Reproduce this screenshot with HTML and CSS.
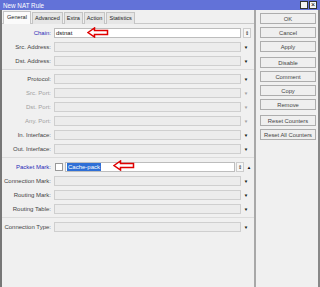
FILE: index.html
```html
<!DOCTYPE html>
<html lang="en">
<head>
  <meta charset="UTF-8">
  <title>New NAT Rule</title>
  <link rel="stylesheet" href="styles.css">
</head>
<body>

  <div class="window">
    <div class="titlebar">
      <span class="title">New NAT Rule</span>
      <span class="winbtns"><span class="wb"></span><span class="wb x">&#215;</span></span>
    </div>

    <div class="main">
      <div class="left">
        <div class="tabs">
          <span class="tab active">General</span>
          <span class="tab">Advanced</span>
          <span class="tab">Extra</span>
          <span class="tab">Action</span>
          <span class="tab">Statistics</span>
        </div>

        <div class="panel">
          <div class="group">
            <div class="row">
              <label class="blue">Chain:</label>
              <div class="field white"><span class="val">dstnat</span></div>
              <span class="spin">&#8661;</span>
            </div>
            <div class="row">
              <label>Src. Address:</label>
              <div class="field"></div>
              <span class="arr">&#9660;</span>
            </div>
            <div class="row">
              <label>Dst. Address:</label>
              <div class="field"></div>
              <span class="arr">&#9660;</span>
            </div>
          </div>

          <div class="group">
            <div class="row">
              <label>Protocol:</label>
              <div class="field"></div>
              <span class="arr">&#9660;</span>
            </div>
            <div class="row dim">
              <label>Src. Port:</label>
              <div class="field"></div>
              <span class="arr">&#9660;</span>
            </div>
            <div class="row dim">
              <label>Dst. Port:</label>
              <div class="field"></div>
              <span class="arr">&#9660;</span>
            </div>
            <div class="row dim">
              <label>Any. Port:</label>
              <div class="field"></div>
              <span class="arr">&#9660;</span>
            </div>
            <div class="row">
              <label>In. Interface:</label>
              <div class="field"></div>
              <span class="arr">&#9660;</span>
            </div>
            <div class="row">
              <label>Out. Interface:</label>
              <div class="field"></div>
              <span class="arr">&#9660;</span>
            </div>
          </div>

          <div class="group">
            <div class="row">
              <label class="blue">Packet Mark:</label>
              <span class="check"></span>
              <div class="field white short"><span class="sel">Cache-pack</span></div>
              <span class="spin small">&#8661;</span>
              <span class="arr">&#9650;</span>
            </div>
            <div class="row">
              <label>Connection Mark:</label>
              <div class="field"></div>
              <span class="arr">&#9660;</span>
            </div>
            <div class="row">
              <label>Routing Mark:</label>
              <div class="field"></div>
              <span class="arr">&#9660;</span>
            </div>
            <div class="row">
              <label>Routing Table:</label>
              <div class="field"></div>
              <span class="arr">&#9660;</span>
            </div>
          </div>

          <div class="group last">
            <div class="row">
              <label>Connection Type:</label>
              <div class="field"></div>
              <span class="arr">&#9660;</span>
            </div>
          </div>
        </div>
      </div>

      <div class="right">
        <button>OK</button>
        <button>Cancel</button>
        <button>Apply</button>
        <button class="gap">Disable</button>
        <button>Comment</button>
        <button>Copy</button>
        <button>Remove</button>
        <button class="gap">Reset Counters</button>
        <button>Reset All Counters</button>
      </div>
    </div>
  </div>

  <!-- red arrows -->
  <svg class="mark m1" width="22" height="11" viewBox="0 0 22 11">
    <path d="M1 5.5 L7.5 1 L7.5 3.5 L20.5 3.5 L20.5 7.5 L7.5 7.5 L7.5 10 Z" fill="none" stroke="#e00000" stroke-width="1.5"/>
  </svg>
  <svg class="mark m2" width="22" height="11" viewBox="0 0 22 11">
    <path d="M1 5.5 L7.5 1 L7.5 3.5 L20.5 3.5 L20.5 7.5 L7.5 7.5 L7.5 10 Z" fill="none" stroke="#e00000" stroke-width="1.5"/>
  </svg>

</body>
</html>
```

FILE: styles.css
```css
body {
  margin: 0;
  font-family: "Liberation Sans", Arial, sans-serif;
  font-size: 6px;
  color: #333;
  background-color: #f0f0f0;
}

.window {
  width: 320px;
  height: 287px;
  display: flex;
  flex-direction: column;
  position: relative;
}

.titlebar {
  height: 10px;
  background-color: #6272d8;
  color: #fff;
  display: flex;
  align-items: center;
  justify-content: space-between;
  padding: 0 3px 0 3px;
}

.title {
  font-size: 6.3px;
}

.winbtns {
  display: flex;
  gap: 1px;
}

.wb {
  width: 6px;
  height: 6px;
  background: #f4f4f4;
  border: 1px solid #333;
  color: #000;
  font-size: 7px;
  line-height: 6px;
  text-align: center;
}

.main {
  flex: 1;
  display: flex;
  border-left: 2px solid #777;
  border-right: 2px solid #888;
}

.left {
  width: 252px;
  border-right: 2px solid #a8a8a8;
  display: flex;
  flex-direction: column;
}

.tabs {
  display: flex;
  padding: 1px 0 0 1px;
  height: 12px;
  border-bottom: 1px solid #c8c8c8;
}

.tab {
  font-size: 5.6px;
  padding: 0 2px;
  margin-top: 1px;
  height: 11px;
  line-height: 11px;
  border: 1px solid #c4c4c4;
  border-bottom: none;
  margin-right: 1px;
  background: #e6e6e6;
  color: #222;
}

.tab.active {
  background: #fbfbfb;
  margin-top: 0;
  height: 12px;
  padding: 0 3px;
}

.panel {
  flex: 1;
  padding-top: 3px;
}

.group {
  display: flex;
  flex-direction: column;
  gap: 4px;
  padding: 1px 0 3px;
  border-bottom: 1px solid #dcdcdc;
  margin-bottom: 3px;
}

.group.last {
  border-bottom: none;
}

.row {
  display: flex;
  align-items: center;
  height: 10px;
}

.row label {
  width: 49px;
  text-align: right;
  padding-right: 3px;
  color: #444;
  white-space: nowrap;
}

.row label.blue {
  color: #2a2ab8;
}

.row.dim label,
.row.dim .arr {
  color: #a0a0a0;
}

.field {
  width: 184px;
  height: 8px;
  border: 1px solid #cfcfcf;
  background: #ececec;
  display: flex;
  align-items: center;
  padding-left: 1px;
}

.field.white {
  background: #fff;
  border-color: #bdbdbd;
}

.field.short {
  width: 167px;
}

.val {
  color: #111;
}

.sel {
  background: #2f6fd6;
  color: #fff;
  padding: 0 1px;
  line-height: 8px;
}

.spin {
  width: 6px;
  height: 8px;
  margin-left: 2px;
  border: 1px solid #ccc;
  background: #f6f6f6;
  font-size: 5px;
  text-align: center;
  line-height: 8px;
  color: #111;
}

.spin.small {
  margin-left: 1px;
}

.arr {
  width: 8px;
  margin-left: 1px;
  text-align: center;
  font-size: 4.5px;
  color: #111;
}

.check {
  width: 6px;
  height: 6px;
  border: 1px solid #999;
  background: #fff;
  margin: 0 2px 0 1px;
}

.right {
  flex: 1;
  display: flex;
  flex-direction: column;
  gap: 3px;
  padding: 3px 2px 0 4px;
}

.right button {
  height: 11px;
  padding: 0;
  font-family: "Liberation Sans", Arial, sans-serif;
  font-size: 5.8px;
  color: #444;
  background: #efefef;
  border: 1px solid #adadad;
  border-radius: 0;
}

.right button.gap {
  margin-top: 2px;
}

.mark {
  position: absolute;
}

.m1 {
  left: 87px;
  top: 27px;
}

.m2 {
  left: 113px;
  top: 160px;
}
```
